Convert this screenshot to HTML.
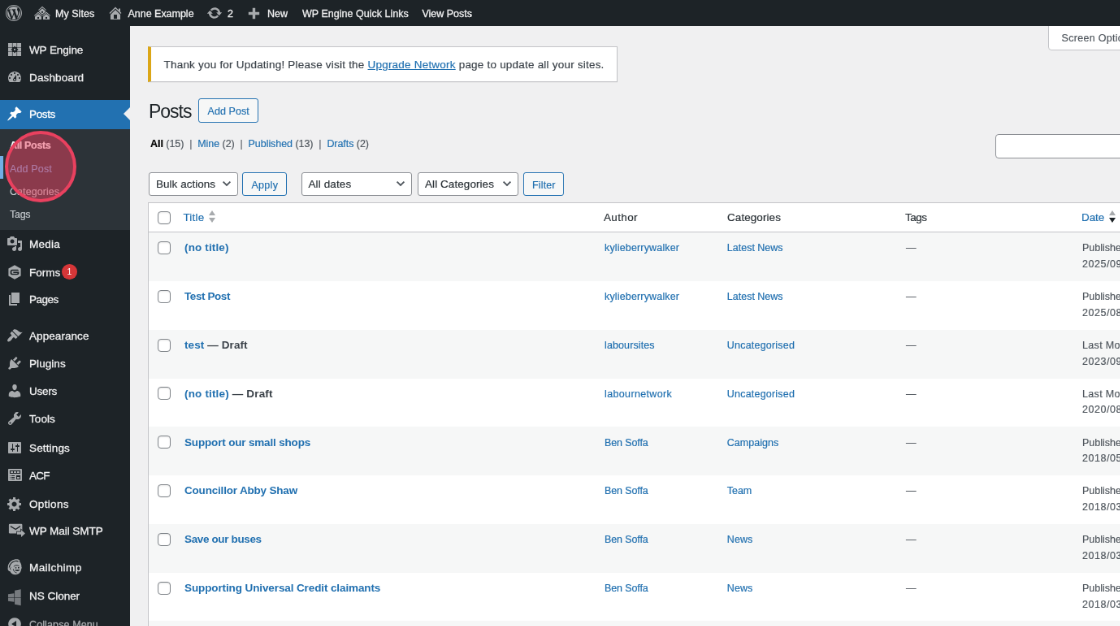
<!DOCTYPE html>
<html lang="en"><head>
<meta charset="utf-8">
<title>Posts</title>
<style>
*{box-sizing:border-box}
html,body{margin:0;padding:0;width:1120px;height:626px;overflow:hidden;background:#f0f0f1}
body{font-family:"Liberation Sans",sans-serif;font-size:12.5px;line-height:1.4;color:#3c434a}
#scale{position:absolute;left:0;top:0;width:1700px;height:790px;transform:scale(.8125);transform-origin:0 0;overflow:hidden;will-change:transform}
a{color:#2271b1;text-decoration:none}
.t{position:absolute;white-space:nowrap;display:block;-webkit-text-stroke:.18px currentColor}
/* admin bar */
#bar{position:absolute;left:0;top:0;width:1700px;height:32px;background:#1d2327;color:#f0f0f1;font-size:12.5px;line-height:32px;white-space:nowrap}
#bar .t{top:1px;height:32px;line-height:33px;color:#f0f0f1;-webkit-text-stroke:.3px currentColor}
#bar svg{position:absolute;top:6px;width:20px;height:20px;fill:#a7aaad;display:block}
/* menu */
#menu{position:absolute;left:0;top:0;width:160px;height:790px;background:#1d2327}
.mi{position:absolute;left:0;width:160px;height:34px;color:#f0f0f1;font-size:13.5px;line-height:18px}
.mi svg{position:absolute;left:8px;top:7px;width:20px;height:20px;fill:#a7aaad;display:block}
.mi .t{left:36px;top:9px;color:#f0f0f1;-webkit-text-stroke:.3px currentColor}
.mi.cur{background:#2271b1;color:#fff;height:36px}
.mi.cur svg{fill:#fff}
.mi.cur .t{color:#fff}
.mi.cur:after{content:"";position:absolute;right:0;top:9px;border:8px solid transparent;border-right-color:#f0f0f1}
#sub{position:absolute;left:0;top:159px;width:160px;height:123.5px;background:#2c3338}
#sub .t{left:12px;font-size:12.5px;line-height:18px;color:#c3c8cc}
#sub .hov{position:absolute;left:0;top:32.7px;width:4px;height:28.2px;background:#72aee6}
.badge{position:absolute;left:76px;top:7.8px;width:18.6px;height:18.6px;border-radius:9.3px;background:#d63638;color:#fff;font-size:10.5px;line-height:18px;text-align:center}
/* content */
#content{position:absolute;left:0;top:0;width:1700px;height:790px}
.box{position:absolute;background:#fff;border:1px solid #c3c4c7}
.btn{position:absolute;height:29.5px;border:1px solid #2271b1;border-radius:3px;background:#f6f7f7;color:#2271b1;font-size:12.5px}
.btn .t{top:1px;line-height:28px;color:#2271b1}
.sel{position:absolute;height:29.5px;border:1px solid #8c8f94;border-radius:3px;background:#fff;color:#2c3338;font-size:13.5px}
.sel .t{left:8px;top:0;line-height:28px;color:#2c3338}
.sel svg{position:absolute;right:5px;top:5.3px;width:16px;height:16px;fill:none;stroke:#50575e;stroke-width:2.3}
.cb{position:absolute;width:16px;height:16px;border:1px solid #7f8489;border-radius:4px;background:#fff;box-shadow:inset 0 1px 2px rgba(0,0,0,.1)}
#tbl{position:absolute;left:182px;top:248.7px;width:1500px;height:600px;background:#fff;border:1px solid #c3c4c7}
#tbl .hd{position:absolute;left:0;top:0;width:100%;height:36.3px;border-bottom:1px solid #c3c4c7}
.row{position:absolute;left:0;width:100%;height:60px}
.row.odd{background:#f6f7f7}
.th{font-size:13.5px;line-height:20px;color:#2c3338;top:8.7px}
.row .t{top:9.3px;font-size:12.5px;line-height:20px;color:#50575e}
.row .ti{font-size:13.5px;font-weight:bold;color:#2271b1;left:44px;-webkit-text-stroke:0}
.row .ti b{color:#3c434a}
.row .au{left:561px;color:#2271b1}
.row .ca{left:711.8px;color:#2271b1}
.row .tg{left:932px}
.row .d1{left:1149px}
.row .d2{left:1149px;top:29px;letter-spacing:.55px}
.row .lm{letter-spacing:.35px}
.row .cb{left:11px;top:11px}
.sort{position:absolute;width:9.4px;height:15px}
.sort i{position:absolute;left:0;width:0;height:0;border-left:4.7px solid transparent;border-right:4.7px solid transparent}
.sort .u{top:-.3px;border-bottom:6.3px solid #a7aaad}
.sort .d{top:8.8px;border-top:6.3px solid #a7aaad}
.sort .d.on{border-top-color:#1d2327}
#hl{position:absolute;left:6.4px;top:161.2px;width:88px;height:88px;border-radius:50%;border:4.5px solid #e9415f;background:rgba(233,65,95,.5)}
</style>
</head>
<body>
<div id="scale">
<div id="menu">
<div class="mi" style="top:44px"><svg viewBox="0 0 20 20"><path d="M2 2h4.900v4.900H2zM7.550 2h4.900v4.900h-1.300L10 5.400 8.850 6.900H7.550zM13.100 2H18v4.900h-4.900zM2 7.550h4.900v1.300L5.400 10l1.500 1.150v1.300H2zM13.100 7.550H18v4.900h-4.900v-1.300L14.600 10l-1.500-1.150zM9.100 9.100h1.800v1.800H9.100zM2 13.100h4.900V18H2zM7.550 13.100h1.300L10 14.600l1.150-1.500h1.300V18h-4.900zM13.100 13.100H18V18h-4.900z"></path></svg><span class="t" style="letter-spacing: -0.12px;">WP Engine</span></div>
<div class="mi" style="top:78px"><svg viewBox="0 0 20 20"><path d="M3.76 16h12.48c1.1-1.37 1.76-3.11 1.76-5 0-4.42-3.58-8-8-8s-8 3.58-8 8c0 1.890.66 3.630 1.760 5zM10 4c.55 0 1 .45 1 1s-.45 1-1 1-1-.45-1-1 .45-1 1-1zM6 6c.55 0 1 .45 1 1s-.45 1-1 1-1-.45-1-1 .45-1 1-1zm8 0c.55 0 1 .45 1 1s-.45 1-1 1-1-.45-1-1 .45-1 1-1zm-5.370 5.550L12 7v6c0 1.100-.9 2-2 2s-2-.9-2-2c0-.57.24-1.080.63-1.450zM4 10c.55 0 1 .45 1 1s-.45 1-1 1-1-.45-1-1 .45-1 1-1zm12 0c.55 0 1 .45 1 1s-.45 1-1 1-1-.45-1-1 .45-1 1-1zm-5 3c0-.55-.45-1-1-1s-1 .45-1 1 .45 1 1 1 1-.45 1-1z"></path></svg><span class="t" style="letter-spacing: 0.13px;">Dashboard</span></div>
<div class="mi cur" style="top:122.8px"><svg viewBox="0 0 20 20"><path d="M10.440 3.020l1.820-1.820 6.360 6.350-1.830 1.820c-1.050-.68-2.480-.57-3.410.36l-.75.75c-.92.930-1.040 2.350-.35 3.410l-1.830 1.820-2.410-2.410-2.800 2.790c-.42.42-3.380 2.710-3.800 2.290s1.860-3.390 2.280-3.810l2.790-2.790L4.100 9.360l1.830-1.820c1.050.69 2.480.57 3.400-.36l.75-.75c.930-.92 1.050-2.350.36-3.410z"></path></svg><span class="t" style="letter-spacing: -0.35px;">Posts</span></div>
<div id="sub">
<div class="hov"></div>
<span class="t" style="top: 11.3px; color: rgb(255, 255, 255); font-weight: bold; letter-spacing: -0.34px;">All Posts</span>
<span class="t" style="top: 39.6px; color: rgb(114, 174, 230); letter-spacing: 0.15px;">Add Post</span>
<span class="t" style="top: 67.9px; letter-spacing: 0.06px;">Categories</span>
<span class="t" style="top: 96.2px; letter-spacing: -0.28px;">Tags</span>
</div>
<div class="mi" style="top:282.5px"><svg viewBox="0 0 20 20"><path d="M13 11V4c0-.55-.45-1-1-1h-1.670L9 1H5L3.670 3H2c-.55 0-1 .45-1 1v7c0 .55.45 1 1 1h10c.55 0 1-.45 1-1zM7 4.500c1.380 0 2.500 1.120 2.500 2.500S8.380 9.500 7 9.500 4.500 8.380 4.500 7 5.620 4.500 7 4.500zM14 6h5v10.500c0 1.380-1.120 2.500-2.500 2.500S14 17.880 14 16.500s1.120-2.500 2.500-2.500c.17 0 .34.020.5.050V9h-3V6zm-4 8.050V13h2v3.500c0 1.380-1.120 2.500-2.500 2.500S7 17.880 7 16.500 8.120 14 9.500 14c.17 0 .34.020.5.050z"></path></svg><span class="t" style="letter-spacing: 0.22px;">Media</span></div>
<div class="mi" style="top:317.5px"><svg viewBox="0 0 20 20"><path fill-rule="evenodd" d="M10 1.200l7.600 4.400v8.800L10 18.800l-7.600-4.400V5.600zM6.900 6.700c-1.300 0-2.300 1-2.300 2.300v2c0 1.300 1 2.300 2.300 2.300h6.200c1.300 0 2.300-1 2.300-2.300V9.400H8.300V11h5.300c0 .4-.3.700-.7.700H7.100c-.4 0-.7-.3-.7-.7V9c0-.4.300-.7.700-.7h8.100c-.2-.9-1-1.600-2-1.600z"></path></svg><span class="t" style="letter-spacing: 0.01px;">Forms</span><span class="badge">1</span></div>
<div class="mi" style="top:351px"><svg viewBox="0 0 20 20"><path d="M6 15V2h10v13H6zm-1 1h8v2H3V5h2v11z"></path></svg><span class="t" style="letter-spacing: -0.52px;">Pages</span></div>
<div class="mi" style="top:396px"><svg viewBox="0 0 20 20"><path d="M14.480 11.060L7.410 3.990l1.500-1.500c.5-.56 2.300-.47 3.510.32 1.210.8 1.430 1.280 2.910 2.100 1.180.64 2.450 1.260 4.450.85zm-.71.71L6.700 4.700 4.930 6.470c-.39.39-.39 1.020 0 1.410l1.060 1.060c.39.39.39 1.030 0 1.420-.6.6-1.430 1.110-2.210 1.690-.35.26-.7.53-1.010.84C1.430 14.230.4 16.080 1.400 17.070c.99 1 2.840-.03 4.180-1.360.31-.31.580-.66.850-1.020.57-.78 1.080-1.610 1.690-2.210.39-.39 1.020-.39 1.410 0l1.060 1.060c.39.39 1.020.39 1.410 0z"></path></svg><span class="t" style="letter-spacing: 0.07px;">Appearance</span></div>
<div class="mi" style="top:430px"><svg viewBox="0 0 20 20"><path d="M13.110 4.360L9.870 7.600 8 5.730l3.240-3.240c.35-.34 1.050-.2 1.560.32.52.51.66 1.210.31 1.550zm-8 1.770l.91-1.120 9.010 9.010-1.190.84c-.71.71-2.630 1.160-3.820 1.160H6.140L4.900 17.260c-.59.59-1.540.59-2.120 0-.59-.58-.59-1.530 0-2.120l1.240-1.240v-3.880c0-1.130.4-3.190 1.090-3.890zm7.260 3.970l3.240-3.240c.34-.35 1.040-.21 1.550.31.52.51.66 1.210.31 1.550l-3.240 3.250z"></path></svg><span class="t" style="letter-spacing: 0.07px;">Plugins</span></div>
<div class="mi" style="top:464px"><svg viewBox="0 0 20 20"><path d="M10 9.250c-2.270 0-2.730-3.440-2.730-3.440C7 4.020 7.820 2 9.970 2c2.160 0 2.980 2.020 2.710 3.810 0 0-.41 3.440-2.680 3.440zm0 2.570L12.720 10c2.390 0 4.520 2.330 4.520 4.530v2.490s-3.650 1.130-7.240 1.130c-3.650 0-7.240-1.130-7.240-1.130v-2.490c0-2.250 1.940-4.480 4.470-4.480z"></path></svg><span class="t" style="letter-spacing: -0.25px;">Users</span></div>
<div class="mi" style="top:498px"><svg viewBox="0 0 20 20"><path d="M16.680 9.770c-1.340 1.340-3.300 1.670-4.950.99l-5.410 6.520c-.99.99-2.590.99-3.580 0s-.99-2.590 0-3.570l6.520-5.420c-.68-1.650-.35-3.610.99-4.950 1.280-1.280 3.120-1.620 4.720-1.060l-2.890 2.890 2.820 2.820 2.860-2.870c.53 1.580.18 3.390-1.080 4.650zM3.810 16.210c.4.39 1.040.39 1.430 0 .4-.4.4-1.040 0-1.430-.39-.4-1.030-.4-1.430 0-.39.39-.39 1.030 0 1.430z"></path></svg><span class="t" style="letter-spacing: 0.06px;">Tools</span></div>
<div class="mi" style="top:534px"><svg viewBox="0 0 20 20"><path d="M18 16V4c0-.55-.45-1-1-1H3c-.55 0-1 .45-1 1v12c0 .55.45 1 1 1h14c.55 0 1-.45 1-1zM8 11h1c.55 0 1 .45 1 1s-.45 1-1 1H8v1.500c0 .28-.22.5-.5.5s-.5-.22-.5-.5V13H6c-.55 0-1-.45-1-1s.45-1 1-1h1V5.500c0-.28.22-.5.5-.5s.5.22.5.5V11zm5-2h-1c-.55 0-1-.45-1-1s.45-1 1-1h1V5.500c0-.28.22-.5.5-.5s.5.22.5.5V7h1c.55 0 1 .45 1 1s-.45 1-1 1h-1v5.500c0 .28-.22.5-.5.5s-.5-.22-.5-.5V9z"></path></svg><span class="t" style="letter-spacing: 0.15px;">Settings</span></div>
<div class="mi" style="top:567.5px"><svg viewBox="0 0 20 20"><path d="M19 16V3c0-.55-.45-1-1-1H3c-.55 0-1 .45-1 1v13c0 .55.45 1 1 1h15c.55 0 1-.45 1-1zM4 4h13v4H4V4zm1 1v2h3V5H5zm4 0v2h3V5H9zm4 0v2h3V5h-3zm-8.500 5c.28 0 .5.22.5.5s-.22.5-.5.5-.5-.22-.5-.5.22-.5.5-.5zM6 10h4v1H6v-1zm6 0h5v5h-5v-5zm-7.500 2c.28 0 .5.22.5.5s-.22.5-.5.5-.5-.22-.5-.5.22-.5.5-.5zM6 12h4v1H6v-1zm7 0v2h3v-2h-3zm-8.500 2c.28 0 .5.22.5.5s-.22.5-.5.5-.5-.22-.5-.5.22-.5.5-.5zM6 14h4v1H6v-1z"></path></svg><span class="t" style="letter-spacing: -0.73px;">ACF</span></div>
<div class="mi" style="top:602.5px"><svg viewBox="0 0 20 20"><path d="M18 12h-2.180c-.17.7-.44 1.350-.81 1.930l1.540 1.540-2.100 2.100-1.540-1.540c-.58.36-1.230.63-1.910.79V19H8v-2.180c-.68-.16-1.330-.43-1.910-.79l-1.540 1.540-2.120-2.120 1.540-1.540c-.36-.58-.63-1.230-.79-1.910H1V9.030h2.170c.16-.7.44-1.350.8-1.940L2.430 5.550l2.100-2.100 1.540 1.540c.58-.37 1.240-.64 1.930-.81V2h3v2.180c.68.16 1.330.43 1.910.79l1.540-1.540 2.120 2.120-1.540 1.540c.36.59.64 1.240.8 1.940H18V12zm-8.500 1.500c1.660 0 3-1.340 3-3s-1.340-3-3-3-3 1.340-3 3 1.340 3 3 3z"></path></svg><span class="t" style="letter-spacing: 0.34px;">Options</span></div>
<div class="mi" style="top:636px"><svg viewBox="0 0 20 20" style="overflow:visible"><rect x="2.9" y="1.8" width="16.5" height="11.7" rx="1.2"></rect><path d="M4.900 4.600l6.300 3.900 5.700-3.900" fill="none" stroke="#1d2327" stroke-width="1.300"></path><path d="M12.900 11.500H18V9.100l4.950 4.400L18 17.900v-3.200h-5.100z" stroke="#1d2327" stroke-width="1.600" paint-order="stroke"></path></svg><span class="t" style="letter-spacing: -0.05px;">WP Mail SMTP</span></div>
<div class="mi" style="top:680.9px"><svg viewBox="0 0 20 20" style="overflow:visible"><path d="M1.700 10.200C1.500 6.500 4.500 1.800 9.300.700c2.600-.6 5.600-.4 6.800.8.500.5.200 1.100-.4 1.300 1.900 1.800 2.900 4.400 2.700 6.900.5.700.4 1.600-.2 2.200-.2 3.900-3 7-6.900 7.300-3.200.2-5.600-1.300-6.900-4C2.300 15 1 13 1.700 10.200z"></path><path d="M3.400 10.600C3.500 7 6.600 3.200 10.700 2.500c1.400-.2 2.900 0 3.900.5" fill="none" stroke="#1d2327" stroke-width="1.100"></path><path d="M5.500 10.300c-1.300.5-1.400 2.300-.1 3.100" fill="none" stroke="#1d2327" stroke-width=".9"></path><path d="M8.800 9.200c1.400-1.700 4.800-2.200 6.900-.4" fill="none" stroke="#1d2327" stroke-width=".9"></path><path d="M10.600 10.300h1.700v1.300h-1.700zM14 10.100h1.700v1.300H14z" fill="#1d2327"></path><path d="M10 13.300c1.300 2.300 5.200 2.300 6.600-.2z" fill="#1d2327"></path><path d="M8.300 12.200c.2 2.600 1.900 4.600 4.400 4.900" fill="none" stroke="#1d2327" stroke-width=".8"></path></svg><span class="t" style="letter-spacing: 0.43px;">Mailchimp</span></div>
<div class="mi" style="top:715.8px"><svg viewBox="0 0 20 20" style="overflow:visible;fill:#777b7f"><path d="M1.970 8.300L9.350 7.200v4.950H1.970zM1.970 12.700H9.350v5.100l-7.380-1.100zM10.050 3.750l7.650-1.450v9.850h-7.650zM10.050 12.700h7.650v9.600l-7.650-1.600z"></path></svg><span class="t" style="letter-spacing: -0.02px;">NS Cloner</span></div>
<div class="mi" style="top:750.6px"><svg viewBox="0 0 20 20"><path d="M10 2.160c4.330 0 7.840 3.510 7.840 7.840s-3.510 7.840-7.840 7.840S2.160 14.330 2.160 10 5.670 2.160 10 2.160zm2 11.720V6.120L6.180 9.970z"></path></svg><span class="t" style="font-size: 12.5px; color: rgb(167, 170, 173); letter-spacing: 0.12px;">Collapse Menu</span></div>
</div>
<div id="content">
<!-- screen options -->
<div class="box" style="left:1290px;top:31px;width:140px;height:30.5px;border-radius:0 0 4px 4px;border-color:#c3c4c7"><span class="t" style="left:15.5px;top:1.8px;line-height:27px;color:#50575e;letter-spacing:.3px">Screen Options</span></div>
<!-- notice -->
<div class="box" style="left:182px;top:57px;width:578px;height:43.5px;border-left:4px solid #dba617;box-shadow:0 1px 1px rgba(0,0,0,.04)"><span class="t" style="left: 15.5px; top: 1.1px; line-height: 42px; font-size: 13.5px; color: rgb(60, 67, 74); letter-spacing: 0.21px;">Thank you for Updating! Please visit the <a style="text-decoration:underline">Upgrade Network</a> page to update all your sites.</span></div>
<!-- heading -->
<span class="t" style="left: 183px; top: 121.5px; font-size: 23px; line-height: 30px; color: rgb(29, 35, 39); -webkit-text-stroke: 0px; letter-spacing: -1.01px;">Posts</span>
<div class="btn" style="left:244px;top:121px;width:73.5px"><span class="t" style="left: 10.5px; letter-spacing: 0.07px;">Add Post</span></div>
<!-- subsubsub -->
<span class="t" style="left: 185px; top: 166.6px; line-height: 20px; color: rgb(100, 105, 112); letter-spacing: -0.05px;"><b style="color:#000">All</b> <span style="color:#50575e">(15)</span> &nbsp;|&nbsp; <a>Mine</a> <span style="color:#50575e">(2)</span> &nbsp;|&nbsp; <a>Published</a> <span style="color:#50575e">(13)</span> &nbsp;|&nbsp; <a>Drafts</a> <span style="color:#50575e">(2)</span></span>
<!-- search -->
<div class="box" style="left:1224.5px;top:164.5px;width:300px;height:30px;border-color:#8c8f94;border-radius:4px"></div>
<!-- tablenav -->
<div class="sel" style="left:183px;top:211.700px;width:109.5px"><span class="t" style="letter-spacing: 0.03px;">Bulk actions</span><svg viewBox="0 0 20 20"><path d="M4.500 7l5.500 5.500L15.500 7"></path></svg></div>
<div class="btn" style="left:297.900px;top:211.700px;width:55.5px"><span class="t" style="left: 10.5px; letter-spacing: 0.32px;">Apply</span></div>
<div class="sel" style="left:370.500px;top:211.700px;width:136.5px"><span class="t" style="letter-spacing: 0.11px;">All dates</span><svg viewBox="0 0 20 20"><path d="M4.500 7l5.500 5.500L15.500 7"></path></svg></div>
<div class="sel" style="left:514px;top:211.700px;width:124px"><span class="t" style="letter-spacing: 0.07px;">All Categories</span><svg viewBox="0 0 20 20"><path d="M4.500 7l5.500 5.500L15.500 7"></path></svg></div>
<div class="btn" style="left:643.500px;top:211.700px;width:50.5px"><span class="t" style="left: 10.5px; letter-spacing: 0.15px;">Filter</span></div>
<!-- table -->
<div id="tbl">
<div class="hd">
<div class="cb" style="left:11px;top:10.500px"></div>
<a class="t th" style="left: 42.4px; color: rgb(34, 113, 177); letter-spacing: 0.2px;">Title</a><div class="sort" style="left:74px;top:10px"><i class="u"></i><i class="d"></i></div>
<span class="t th" style="left: 560px; letter-spacing: 0.34px;">Author</span>
<span class="t th" style="left: 712px; letter-spacing: 0.07px;">Categories</span>
<span class="t th" style="left: 931px; letter-spacing: -0.48px;">Tags</span>
<a class="t th" style="left: 1148px; color: rgb(34, 113, 177); letter-spacing: -0.11px;">Date</a><div class="sort" style="left:1182px;top:10px"><i class="u"></i><i class="d on"></i></div>
</div>
<div class="row odd" style="top:36.4px"><div class="cb"></div><a class="t ti" style="letter-spacing: 0.14px;">(no title)</a><a class="t au" style="letter-spacing: 0.16px;">kylieberrywalker</a><a class="t ca" style="">Latest News</a><span class="t tg">—</span><span class="t d1">Published</span><span class="t d2">2025/09/16 at 2:14 pm</span></div>
<div class="row" style="top:96.2px"><div class="cb"></div><a class="t ti" style="letter-spacing: -0.42px;">Test Post</a><a class="t au" style="letter-spacing: 0.16px;">kylieberrywalker</a><a class="t ca" style="">Latest News</a><span class="t tg">—</span><span class="t d1">Published</span><span class="t d2">2025/08/21 at 11:02 am</span></div>
<div class="row odd" style="top:156.0px"><div class="cb"></div><a class="t ti" style="letter-spacing: 0.1px;">test <b>— Draft</b></a><a class="t au" style="letter-spacing: 0.11px;">laboursites</a><a class="t ca" style="letter-spacing: 0.21px;">Uncategorised</a><span class="t tg">—</span><span class="t d1 lm">Last Modified</span><span class="t d2">2023/09/05 at 3:41 pm</span></div>
<div class="row" style="top:215.8px"><div class="cb"></div><a class="t ti" style="letter-spacing: 0.16px;">(no title) <b>— Draft</b></a><a class="t au" style="letter-spacing: 0.36px;">labournetwork</a><a class="t ca" style="letter-spacing: 0.21px;">Uncategorised</a><span class="t tg">—</span><span class="t d1 lm">Last Modified</span><span class="t d2">2020/08/11 at 9:27 am</span></div>
<div class="row odd" style="top:275.6px"><div class="cb"></div><a class="t ti" style="letter-spacing: -0.17px;">Support our small shops</a><a class="t au" style="letter-spacing: -0.11px;">Ben Soffa</a><a class="t ca" style="letter-spacing: 0.04px;">Campaigns</a><span class="t tg">—</span><span class="t d1">Published</span><span class="t d2">2018/05/02 at 1:15 pm</span></div>
<div class="row" style="top:335.4px"><div class="cb"></div><a class="t ti" style="letter-spacing: -0.19px;">Councillor Abby Shaw</a><a class="t au" style="letter-spacing: -0.11px;">Ben Soffa</a><a class="t ca" style="letter-spacing: -0.04px;">Team</a><span class="t tg">—</span><span class="t d1">Published</span><span class="t d2">2018/03/28 at 4:50 pm</span></div>
<div class="row odd" style="top:395.2px"><div class="cb"></div><a class="t ti" style="letter-spacing: -0.36px;">Save our buses</a><a class="t au" style="letter-spacing: -0.11px;">Ben Soffa</a><a class="t ca" style="letter-spacing: 0.08px;">News</a><span class="t tg">—</span><span class="t d1">Published</span><span class="t d2">2018/03/20 at 10:05 am</span></div>
<div class="row" style="top:455.0px"><div class="cb"></div><a class="t ti" style="letter-spacing: -0.11px;">Supporting Universal Credit claimants</a><a class="t au" style="letter-spacing: -0.11px;">Ben Soffa</a><a class="t ca" style="letter-spacing: 0.08px;">News</a><span class="t tg">—</span><span class="t d1">Published</span><span class="t d2">2018/03/12 at 9:30 am</span></div>
<div class="row odd" style="top:514.8px"></div>
</div>
</div>
<div id="bar">
<svg viewBox="0 0 20 20" style="left:7px"><path d="M20 10c0-5.520-4.480-10-10-10S0 4.480 0 10s4.480 10 10 10 10-4.480 10-10zM10 1.010c4.970 0 8.990 4.020 8.990 8.990s-4.020 8.990-8.990 8.990S1.010 14.970 1.010 10 5.030 1.010 10 1.010zM8.010 14.820L4.960 6.610c.49-.03 1.050-.08 1.050-.08.43-.05.38-1.010-.06-.99 0 0-1.290.1-2.130.1-.15 0-.33 0-.52-.01 1.440-2.170 3.900-3.600 6.700-3.600 2.090 0 3.990.79 5.410 2.090-.6-.08-1.450.35-1.450 1.420 0 .66.38 1.220.79 1.880.31.54.5 1.220.5 2.210 0 1.340-1.270 4.480-1.270 4.480l-2.710-7.500c.48-.03.75-.16.75-.16.43-.05.38-1.100-.05-1.080 0 0-1.300.11-2.140.11-.78 0-2.110-.11-2.110-.11-.43-.02-.48 1.060-.05 1.080l.84.08 1.120 3.040zm6.020 2.150L16.640 10s.67-1.690.39-3.810c.63 1.140.94 2.420.94 3.810 0 2.960-1.560 5.580-3.940 6.970zM2.680 6.770L6.500 17.250c-2.670-1.300-4.470-4.080-4.470-7.250 0-1.160.2-2.230.65-3.230zm7.450 4.530l2.290 6.250c-.75.27-1.570.42-2.420.42-.72 0-1.410-.11-2.060-.3z"></path></svg>
<svg viewBox="0 0 20 20" style="left:41.500px"><path d="M14.270 6.870L10 3.140 5.730 6.870 5 6.140l5-4.380 5 4.380zM14 8.420l-4.050 3.430L6 8.380v-.74l4-3.500 4 3.500v.78zM11 9.700V8H9v1.700h2zm-1.730 4.030L5 10 .73 13.730 0 13l5-4.380L10 13zm10 0L15 10l-4.270 3.730L10 13l5-4.380L20 13zM5 11l4 3.500V18H1v-3.500zm10 0l4 3.500V18h-8v-3.500zm-9 6v-2H4v2h2zm10 0v-2h-2v2h2z"></path></svg>
<span class="t" style="left: 68px; letter-spacing: 0.03px;">My Sites</span>
<svg viewBox="0 0 20 20" style="left:131.500px"><path d="M16 8.500l1.530 1.530-1.060 1.060L10 4.620l-6.470 6.470-1.060-1.060L10 2.500l4 4v-2h2v4zm-6-2.460l6 5.990V18H4v-5.970zM12 17v-5H8v5h4z"></path></svg>
<span class="t" style="left: 157.5px; letter-spacing: -0.02px;">Anne Example</span>
<svg viewBox="0 0 20 20" style="left:254px"><path d="M10.200 3.280c3.530 0 6.430 2.610 6.920 6h2.080l-3.500 4-3.500-4h2.320c-.45-1.970-2.210-3.450-4.320-3.450-1.450 0-2.730.71-3.540 1.780L4.950 5.660C6.230 4.200 8.110 3.280 10.200 3.280zm-.4 13.440c-3.520 0-6.430-2.610-6.920-6H.8l3.500-4c1.170 1.330 2.330 2.670 3.500 4H5.480c.45 1.970 2.210 3.450 4.320 3.450 1.450 0 2.730-.71 3.540-1.780l1.710 1.950c-1.280 1.460-3.150 2.380-5.250 2.380z"></path></svg>
<span class="t" style="left:280px">2</span>
<svg viewBox="0 0 20 20" style="left:302px;top:8px"><path d="M17.200 6.800v3.400h-5v5H8.800v-5h-5V6.800h5v-5h3.400v5z"></path></svg>
<span class="t" style="left: 329px; letter-spacing: 0.03px;">New</span>
<span class="t" style="left: 372px; letter-spacing: 0.02px;">WP Engine Quick Links</span>
<span class="t" style="left: 519.5px; letter-spacing: -0.01px;">View Posts</span>
</div>
<div id="hl"></div>
</div>


</body></html>
